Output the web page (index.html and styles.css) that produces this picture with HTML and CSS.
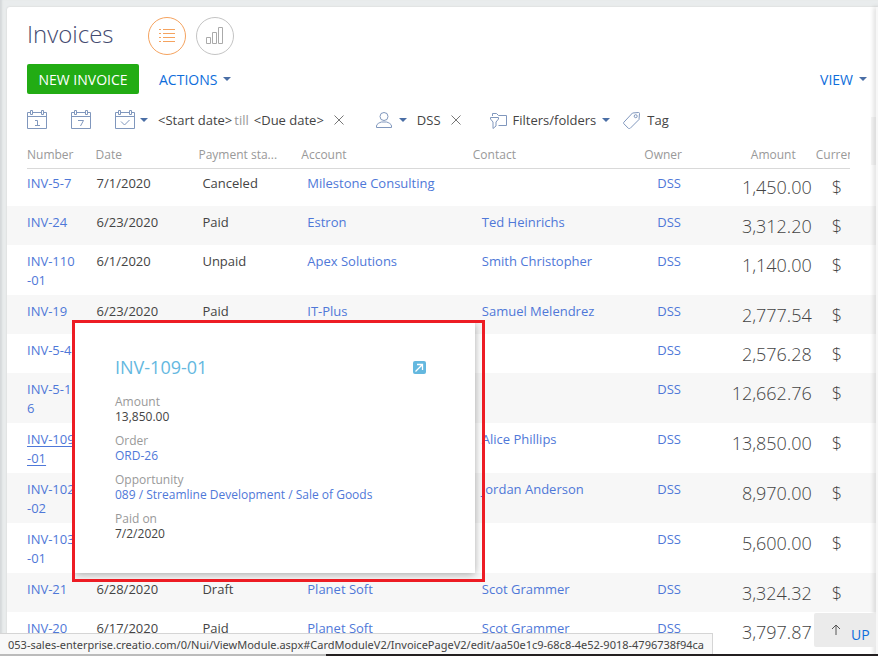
FILE: index.html
```html
<!DOCTYPE html>
<html lang="en">
<head>
    <meta charset="UTF-8">
    <meta name="viewport" content="width=device-width, initial-scale=1.0">
    <title>Invoices</title>
    <link rel="stylesheet" href="styles.css">
</head>
<body>
    <main class="panel">
        <!-- Title and view switch -->
        <header class="header">
            <h1>Invoices</h1>
            <button class="round active" aria-label="List view">
                <svg width="18" height="16" viewBox="0 0 18 16"><path d="M1 1.500h2M5 1.500h12M1 5.500h2M5 5.500h12M1 9.500h2M5 9.500h12M1 13.500h2M5 13.500h12"/></svg>
            </button>
            <button class="round" aria-label="Dashboard view">
                <svg width="18" height="18" viewBox="0 0 18 18"><path d="M.5 10.500h4v6h-4zM6.500 5.500h4v11h-4zM12.500.5h4v16h-4z"/></svg>
            </button>
        </header>

        <div class="actions">
            <button class="new-button">NEW INVOICE</button>
            <button class="menu-button">ACTIONS <span class="caret"></span></button>
            <button class="menu-button view">VIEW <span class="caret"></span></button>
        </div>

        <!-- Filters -->
        <div class="filters">
            <button class="calendar" aria-label="Today">
                <svg width="20" height="20" viewBox="0 0 20 20"><path d="M3.500 2.500h-3v16h19v-16h-3M5.500 2.500h9M.5 6.500h19M3.500.5h2v4h-2zM14.500.5h2v4h-2zM8 10.500h2.500v5M8 15.500h5"/></svg>
            </button>
            <button class="calendar" aria-label="This week">
                <svg width="20" height="20" viewBox="0 0 20 20"><path d="M3.500 2.500h-3v16h19v-16h-3M5.500 2.500h9M.5 6.500h19M3.500.5h2v4h-2zM14.500.5h2v4h-2zM7 10.500h5.500l-3 5.500"/></svg>
            </button>
            <button class="period" aria-label="Period">
                <svg width="20" height="20" viewBox="0 0 20 20"><path d="M3.500 2.500h-3v16h19v-16h-3M5.500 2.500h9M.5 6.500h19M3.500.5h2v4h-2zM14.500.5h2v4h-2zM6 11.500l3.500 3.500 5-5"/></svg>
                <span class="caret"></span>
            </button>
            <div class="dates">
                <button>&lt;Start date&gt;</button>
                <span class="till">till</span>
                <button class="due">&lt;Due date&gt;</button>
            </div>
            <button class="clear" aria-label="Clear period">
                <svg width="10" height="10" viewBox="0 0 10 10"><path d="M.5.5l9 9M9.500.5l-9 9"/></svg>
            </button>
            <button class="owner-filter" aria-label="Owner">
                <svg width="16" height="16" viewBox="0 0 16 16"><circle cx="8" cy="4.500" r="4"/><path d="M.5 15.500v-1.500c0-2 3-3.500 5-4h5c2 .5 5 2 5 4v1.500z"/></svg>
                <span class="caret"></span>
            </button>
            <button>DSS</button>
            <button class="clear" aria-label="Clear owner">
                <svg width="10" height="10" viewBox="0 0 10 10"><path d="M.5.5l9 9M9.500.5l-9 9"/></svg>
            </button>
            <button class="folders">
                <svg width="17" height="17" viewBox="0 0 17 17"><path d="M2.500 4V1.500h4l2 2h8v10h-8M.5 5.500h8v1.500l-2.500 3v4l-3 2.500V10l-2.500-3z"/></svg>
                Filters/folders <span class="caret"></span>
            </button>
            <button class="tag">
                <svg width="17" height="17" viewBox="0 0 17 17"><path d="M9.500 1l6-.5q1 0 1 1l-.5 6-9 9q-.7.500-1.400 0L.8 11.700q-.6-.7 0-1.400z"/><circle cx="12.700" cy="4.200" r="1.500"/></svg>
                Tag
            </button>
        </div>

        <!-- Invoice list -->
        <table class="invoices">
            <thead>
                <tr>
                    <th class="number">Number</th>
                    <th class="date">Date</th>
                    <th class="status">Payment sta...</th>
                    <th class="account">Account</th>
                    <th class="contact">Contact</th>
                    <th class="owner">Owner</th>
                    <th class="amount">Amount</th>
                    <th class="currency">Currency</th>
                </tr>
            </thead>
            <tbody>
                <tr><td class="number"><a href="#">INV-5-7</a></td><td class="date">7/1/2020</td><td class="status">Canceled</td><td class="account"><a href="#">Milestone Consulting</a></td><td class="contact"></td><td class="owner"><a href="#">DSS</a></td><td class="amount">1,450.00</td><td class="currency">$</td></tr>
                <tr><td class="number"><a href="#">INV-24</a></td><td class="date">6/23/2020</td><td class="status">Paid</td><td class="account"><a href="#">Estron</a></td><td class="contact"><a href="#">Ted Heinrichs</a></td><td class="owner"><a href="#">DSS</a></td><td class="amount">3,312.20</td><td class="currency">$</td></tr>
                <tr><td class="number"><a href="#">INV-110<br>-01</a></td><td class="date">6/1/2020</td><td class="status">Unpaid</td><td class="account"><a href="#">Apex Solutions</a></td><td class="contact"><a href="#">Smith Christopher</a></td><td class="owner"><a href="#">DSS</a></td><td class="amount">1,140.00</td><td class="currency">$</td></tr>
                <tr><td class="number"><a href="#">INV-19</a></td><td class="date">6/23/2020</td><td class="status">Paid</td><td class="account"><a href="#">IT-Plus</a></td><td class="contact"><a href="#">Samuel Melendrez</a></td><td class="owner"><a href="#">DSS</a></td><td class="amount">2,777.54</td><td class="currency">$</td></tr>
                <tr><td class="number"><a href="#">INV-5-4</a></td><td class="date"></td><td class="status"></td><td class="account"></td><td class="contact"></td><td class="owner"><a href="#">DSS</a></td><td class="amount">2,576.28</td><td class="currency">$</td></tr>
                <tr><td class="number"><a href="#">INV-5-1<br>6</a></td><td class="date"></td><td class="status"></td><td class="account"></td><td class="contact"></td><td class="owner"><a href="#">DSS</a></td><td class="amount">12,662.76</td><td class="currency">$</td></tr>
                <tr><td class="number"><a class="current" href="#">INV-109<br>-01</a></td><td class="date"></td><td class="status"></td><td class="account"></td><td class="contact"><a href="#">Alice Phillips</a></td><td class="owner"><a href="#">DSS</a></td><td class="amount">13,850.00</td><td class="currency">$</td></tr>
                <tr><td class="number"><a href="#">INV-102<br>-02</a></td><td class="date"></td><td class="status"></td><td class="account"></td><td class="contact"><a href="#">Jordan Anderson</a></td><td class="owner"><a href="#">DSS</a></td><td class="amount">8,970.00</td><td class="currency">$</td></tr>
                <tr><td class="number"><a href="#">INV-103<br>-01</a></td><td class="date"></td><td class="status"></td><td class="account"></td><td class="contact"></td><td class="owner"><a href="#">DSS</a></td><td class="amount">5,600.00</td><td class="currency">$</td></tr>
                <tr><td class="number"><a href="#">INV-21</a></td><td class="date">6/28/2020</td><td class="status">Draft</td><td class="account"><a href="#">Planet Soft</a></td><td class="contact"><a href="#">Scot Grammer</a></td><td class="owner"><a href="#">DSS</a></td><td class="amount">3,324.32</td><td class="currency">$</td></tr>
                <tr><td class="number"><a href="#">INV-20</a></td><td class="date">6/17/2020</td><td class="status">Paid</td><td class="account"><a href="#">Planet Soft</a></td><td class="contact"><a href="#">Scot Grammer</a></td><td class="owner"><a href="#">DSS</a></td><td class="amount">3,797.87</td><td class="currency">$</td></tr>
            </tbody>
        </table>
    </main>

    <!-- Mini card of the hovered invoice -->
    <div class="highlight">
        <section class="mini-card">
            <div class="mini-title">
                <h2>INV-109-01</h2>
                <a href="#" aria-label="Open invoice">
                    <svg width="13" height="13" viewBox="0 0 13 13"><rect width="13" height="13" rx="2" fill="#64b8df"/><path d="M4 3.500h5.500V9M9.500 3.500l-7 7" fill="none" stroke="#fff" stroke-width="1.300"/></svg>
                </a>
            </div>
            <dl>
                <dt>Amount</dt>
                <dd>13,850.00</dd>
                <dt>Order</dt>
                <dd><a href="#">ORD-26</a></dd>
                <dt>Opportunity</dt>
                <dd><a href="#">089 / Streamline Development / Sale of Goods</a></dd>
                <dt>Paid on</dt>
                <dd>7/2/2020</dd>
            </dl>
        </section>
    </div>

    <div class="side-edge"><span class="side-tab"></span></div>

    <button class="up">
        <svg width="10" height="11" viewBox="0 0 10 11"><path d="M5 11V1M1 5l4-4 4 4"/></svg>
        UP
    </button>

    <div class="bottom-edge"></div>
    <div class="status-bar">053-sales-enterprise.creatio.com/0/Nui/ViewModule.aspx#CardModuleV2/InvoicePageV2/edit/aa50e1c9-68c8-4e52-9018-4796738f94ca</div>
</body>
</html>
```
FILE: styles.css
```css
* {
    box-sizing: border-box;
}

body {
    margin: 0;
    height: 100vh;
    padding: 7px 0 0 7px;
    overflow: hidden;
    background: #e9eced;
    box-shadow: inset 3px 0 2px -1px #d5d9db;
    font-family: "Open Sans", sans-serif;
    font-size: 13px;
    line-height: 19px;
    color: #444;
}

a {
    color: #4f78d8;
    text-decoration: none;
}

button {
    display: flex;
    align-items: center;
    padding: 0;
    border: none;
    background: none;
    font: inherit;
    color: inherit;
    cursor: pointer;
}

svg {
    display: block;
    flex: none;
}

.panel {
    height: 100%;
    padding: 10px 28px 0 20px;
    overflow: hidden;
    background: #fff;
    border-radius: 3px 0 0 0;
    box-shadow: 0 0 2px #ccc;
}

.caret {
    border: 4px solid transparent;
    border-top-color: #4a6ea5;
    border-bottom: none;
}

/* Header */
.header {
    display: flex;
    gap: 10px;
    height: 38px;
}

.header h1 {
    margin: 0 24px 0 0;
    font-size: 24px;
    font-weight: 300;
    line-height: 34px;
    color: #444a70;
}

.round {
    justify-content: center;
    width: 38px;
    height: 38px;
    border: 1px solid #c4c4c4;
    border-radius: 50%;
}

.round svg {
    fill: none;
    stroke: #aaa;
}

.round.active {
    border-color: #f5a35f;
}

.round.active svg {
    stroke: #f5a35f;
}

/* Actions */
.actions {
    display: flex;
    gap: 20px;
    margin: 9px -17px 0 0;
    font-size: 14px;
}

.new-button {
    justify-content: center;
    min-width: 112px;
    height: 30px;
    padding: 0 11px;
    border-radius: 2px;
    background: #22ac14;
    color: #fff;
}

.menu-button {
    gap: 6px;
    color: #0e6ddb;
}

.view {
    margin-left: auto;
}

/* Filters */
.filters {
    display: flex;
    align-items: center;
    height: 24px;
    margin-top: 14px;
    white-space: nowrap;
}

.filters svg {
    fill: none;
    stroke: #8097bd;
}

.calendar {
    margin-right: 24px;
}

.period {
    gap: 5px;
    margin-right: 10px;
}

.dates {
    display: flex;
}

.till {
    margin: 0 5px 0 2px;
    color: #999;
}

.clear {
    margin: 0 29px 0 10px;
}

.filters .clear svg {
    stroke: #777;
}

.owner-filter {
    gap: 7px;
    margin: 0 10px 0 3px;
}

.folders {
    gap: 6px;
    margin-right: 13px;
}

.tag {
    gap: 7px;
}

/* Invoice list */
.invoices {
    width: 100%;
    table-layout: fixed;
    border-spacing: 0;
}

.invoices th {
    padding: 13px 0 4px;
    overflow: hidden;
    border-bottom: 1px solid #d9d9d9;
    font-size: 12px;
    font-weight: 400;
    text-align: left;
    white-space: nowrap;
    color: #999;
}

.invoices td {
    padding: 7px 0 5px;
    vertical-align: top;
}

.invoices tbody tr:first-child td {
    padding-top: 5px;
}

.invoices tbody tr:nth-child(even) {
    background: #f7f7f7;
    box-shadow: -20px 0 #f7f7f7, 28px 0 #f7f7f7;
}

th.number, th.owner {
    width: 8.33%;
}

th.date, th.status, th.amount {
    width: 12.5%;
}

th.account, th.contact {
    width: 20.84%;
}

td.date {
    padding-left: 1px;
}

td.status {
    padding-left: 4px;
}

td.account {
    padding-left: 6px;
}

td.contact {
    padding-left: 9px;
}

td.owner {
    padding-left: 13px;
}

.invoices th.amount {
    padding-right: 20px;
    text-align: right;
}

td.amount, td.currency {
    font-size: 18px;
    font-weight: 300;
    line-height: 27px;
}

.invoices td.amount {
    padding-right: 4px;
    text-align: right;
}

td.currency {
    padding-left: 16px;
}

.current {
    text-decoration: underline;
    text-underline-offset: 2px;
}

/* Mini card */
.highlight {
    position: absolute;
    top: 320px;
    left: 72px;
    padding: 0 7px 6px 0;
    border: 3px solid #ed1c24;
    overflow: hidden;
}

.mini-card {
    width: 400px;
    padding: 32px 49px 23px 40px;
    background: #fff;
    box-shadow: 0 1px 8px rgba(0, 0, 0, 0.35);
    font-size: 12px;
    line-height: 15px;
}

.mini-title {
    display: flex;
    justify-content: space-between;
    align-items: center;
}

.mini-title h2 {
    margin: 0;
    font-size: 18px;
    font-weight: 400;
    line-height: 24px;
    color: #64b8df;
}

.mini-card dl {
    margin: 15px 0 0;
}

.mini-card dt {
    color: #999;
}

.mini-card dd {
    margin: 0 0 9px;
}

/* Window edges */
.side-edge {
    position: absolute;
    top: 7px;
    right: 0;
    bottom: 0;
    width: 2px;
    background: #f7f7f7;
    box-shadow: -1px 0 5px rgba(0, 0, 0, 0.3);
}

.side-tab {
    position: absolute;
    top: 110px;
    right: 2px;
    width: 5px;
    height: 48px;
    background: rgba(0, 0, 0, 0.04);
}

.up {
    position: absolute;
    right: 2px;
    bottom: 9px;
    gap: 10px;
    width: 62px;
    height: 34px;
    padding: 8px 0 0 17px;
    border-radius: 2px;
    background: #ebebeb;
    font-size: 14px;
    color: #0e6ddb;
}

.up svg {
    margin-bottom: 10px;
    fill: none;
    stroke: #555;
}

.bottom-edge {
    position: absolute;
    right: 0;
    bottom: 0;
    left: 0;
    height: 2px;
    background: linear-gradient(90deg, #bbb 326px, #231f20 326px);
}

.status-bar {
    position: absolute;
    bottom: 2px;
    left: 0;
    max-width: 100%;
    height: 21px;
    padding: 0 8px;
    overflow: hidden;
    border: 1px solid #d5d5d5;
    border-width: 1px 1px 0 0;
    background: #f8f8f8;
    font-family: "Noto Sans", sans-serif;
    font-size: 11px;
    line-height: 21px;
    white-space: nowrap;
}
```
